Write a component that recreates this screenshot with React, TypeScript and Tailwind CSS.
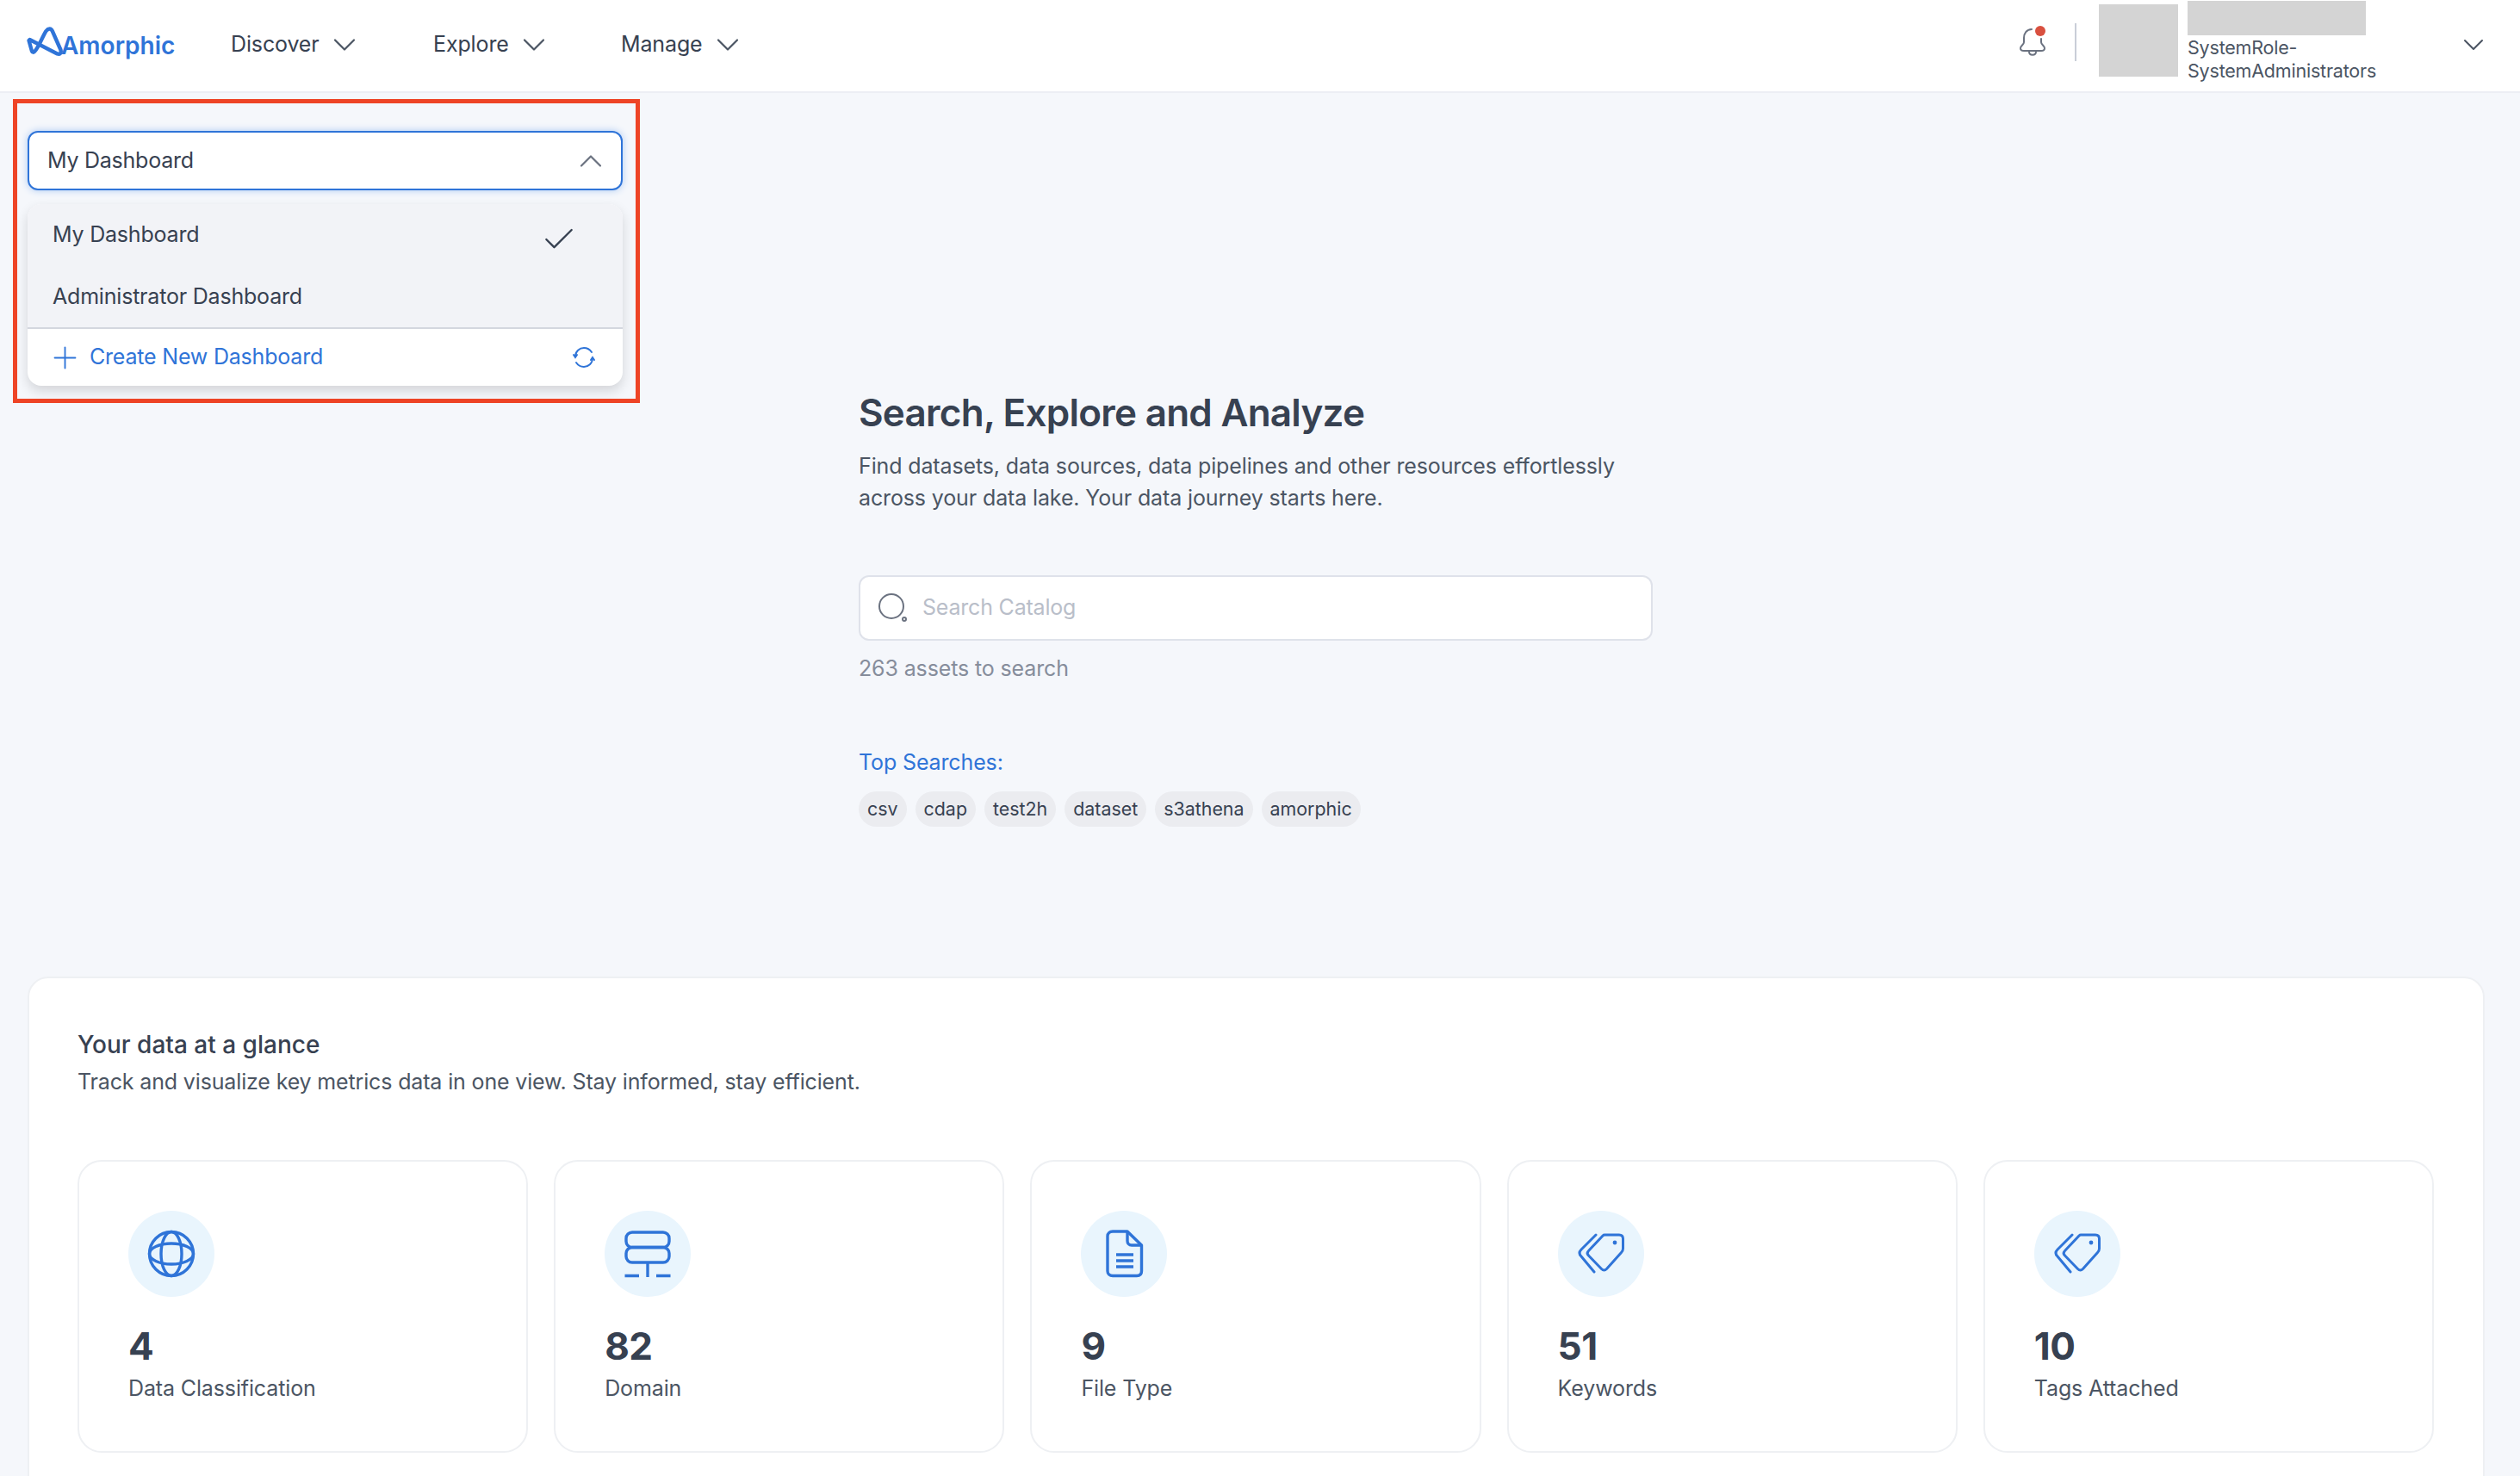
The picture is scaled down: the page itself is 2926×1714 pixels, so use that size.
import { Check, ChevronDown, ChevronUp, Plus } from "lucide-react";

const LogoMark = () => (
  <svg width="44" height="36" viewBox="0 0 44 36" fill="none" className="mb-[8px] shrink-0">
    <path
      d="M3.5 17 L7 29.5 C7.6 31 9 31 10 30 C15 25 19 13 23.5 6 C26 2.8 29.5 2.5 31 6.5 L40.5 28 C41.5 31.5 39.5 33.5 36.5 32.5 L4.5 16 Z"
      stroke="#2f74d8"
      strokeWidth="4.4"
      strokeLinejoin="round"
      strokeLinecap="round"
    />
  </svg>
);

const NavItem = ({ label, className }: { label: string; className: string }) => (
  <button className={`flex items-center gap-[7px] text-[25px] tracking-[-0.13px] text-[#374151] ${className}`}>
    <span>{label}</span>
    <ChevronDown className="w-[44px] h-[44px] text-[#4b5563]" strokeWidth={1.2} />
  </button>
);

const Bell = () => (
  <svg width="36" height="40" viewBox="0 0 36 40" fill="none" className="mb-[8px]">
    <path
      d="M16 6 C10 6 7 11 7 16 V21 C7 24 3 25 3 28 C3 30 5 31 7 31 H27 C29 31 31 30 31 28 C31 25 27 24 27 21 V17"
      stroke="#6b7280"
      strokeWidth="2"
      strokeLinecap="round"
    />
    <path d="M13 32 C13 37 21 37 21 32" stroke="#6b7280" strokeWidth="2" />
    <circle cx="26" cy="8" r="6" fill="#d9503f" />
  </svg>
);

const Globe = () => (
  <svg width="58" height="58" viewBox="0 0 58 58" fill="none" stroke="#2f74d8" strokeWidth="3.4">
    <circle cx="29" cy="29" r="25.5" />
    <ellipse cx="29" cy="29" rx="12" ry="25.5" />
    <ellipse cx="29" cy="29" rx="25.5" ry="12" />
  </svg>
);

const Server = () => (
  <svg width="58" height="58" viewBox="0 0 58 58" fill="none" stroke="#2f74d8" strokeWidth="3.4">
    <rect x="4" y="4" width="50" height="17.5" rx="7" />
    <rect x="4" y="21.5" width="50" height="17.5" rx="7" />
    <path d="M29 39 V56" />
    <path d="M2.5 54.5 H19 M39 54.5 H55.5" />
  </svg>
);

const FileDoc = () => (
  <svg width="58" height="58" viewBox="0 0 58 58" fill="none" stroke="#2f74d8" strokeWidth="3.4" strokeLinejoin="round">
    <path d="M16 3 H33 L49.5 19 V49 C49.5 52.5 47.5 54.5 44 54.5 H16 C12.5 54.5 10 52.5 10 49 V8.5 C10 5 12.5 3 16 3 Z" />
    <path d="M33 3 V14 C33 17 35 19 38 19 H49.5" />
    <path d="M20 30 H40 M20 37 H40 M20 44 H40" />
  </svg>
);

const TagIcon = () => (
  <svg width="58" height="58" viewBox="0 0 58 58" fill="none" stroke="#2f74d8" strokeWidth="3" strokeLinejoin="round" strokeLinecap="round">
    <path d="M33 7 H50 C53 7 54.5 8.5 54.5 11.5 V23 C54.5 25 54 26 52.5 27.5 L35.5 46.5 C33.5 48.5 31.5 48.5 29.5 46.5 L14.5 31 C12.5 29 12.5 27.5 14.5 25.5 L31 8 C31.5 7.5 32 7 33 7 Z" />
    <path d="M23 7 L6 24 C3.5 26.5 3.5 29.5 6 32 L21 50" />
    <circle cx="45" cy="16" r="2.4" fill="#2f74d8" stroke="none" />
  </svg>
);

const SearchIcon = () => (
  <svg width="36" height="36" viewBox="0 0 36 36" fill="none" stroke="#6b7280" strokeWidth="2">
    <circle cx="16" cy="16" r="14" />
    <circle cx="31" cy="31" r="2" />
  </svg>
);

const RefreshIcon = () => (
  <svg width="28" height="28" viewBox="0 0 28 28" fill="none" stroke="#2f74d8" strokeWidth="2" strokeLinecap="round">
    <path d="M4 13 C4 7 9 3 14 3 C18 3 21 5 23 8" />
    <path d="M24 15 C24 21 19 25 14 25 C10 25 7 23 5 20" />
    <path d="M2 11 L4 14 L6 11 M22 17 L24 14 L26 17" />
  </svg>
);

const stats = [
  { value: "4", label: "Data Classification", icon: <Globe /> },
  { value: "82", label: "Domain", icon: <Server /> },
  { value: "9", label: "File Type", icon: <FileDoc /> },
  { value: "51", label: "Keywords", icon: <TagIcon /> },
  { value: "10", label: "Tags Attached", icon: <TagIcon /> },
];

const chips = ["csv", "cdap", "test2h", "dataset", "s3athena", "amorphic"];

const App = () => {
  return (
    <div className="w-[2926px] h-[1714px] overflow-hidden bg-[#f5f7fb] font-['Inter',sans-serif] text-[#374151]">
      <header className="h-[108px] bg-white border-b-2 border-[#eceef4] flex items-center pl-[30px] pr-[34px] pb-[2px]">
        <div className="flex items-center w-[238px]">
          <LogoMark />
          <span className="text-[28px] font-semibold text-[#2f74d8] mb-[-2px] -ml-[3px]">Amorphic</span>
        </div>
        <NavItem label="Discover" className="w-[235px]" />
        <NavItem label="Explore" className="w-[218px]" />
        <NavItem label="Manage" className="" />
        <div className="ml-auto flex items-center">
          <Bell />
          <div className="w-[2px] h-[44px] bg-[#c9ced8] ml-[30px] mr-[26px] mb-[6px]" />
          <div className="w-[92px] h-[84px] bg-[#d4d4d4] mb-[10px]" />
          <div className="w-[312px] ml-[11px] h-[108px] flex flex-col pt-[3px]">
            <div className="w-[207px] h-[40px] bg-[#d4d4d4]" />
            <div className="text-[21.5px] leading-[27px] tracking-[-0.2px] text-[#4b5563] mt-[1px]">
              SystemRole-
              <br />
              SystemAdministrators
            </div>
          </div>
          <ChevronDown className="w-[40px] h-[40px] text-[#4b5563]" strokeWidth={1.2} />
        </div>
      </header>

      <div className="flex h-[1026px]">
        <div className="w-[997px] pl-[15px] pt-[7px]">
          <div className="w-[728px] h-[353px] border-[5px] border-[#ee4426] pl-[12px] pr-[15px] pt-[32px]">
            <div className="h-[69px] bg-white border-2 border-[#2f74d8] rounded-[12px] shadow-[0_0_8px_#a9c8f3] flex items-center justify-between pl-[21px] pr-[13px] text-[25px] tracking-[-0.25px]">
              <span>My Dashboard</span>
              <ChevronUp className="w-[44px] h-[44px] text-[#6b7280]" strokeWidth={1.2} />
            </div>
            <div className="mt-[16px] rounded-[16px] bg-white shadow-[0_6px_14px_rgba(0,0,0,0.14)] overflow-hidden">
              <div className="bg-[#f2f3f7] h-[145px] border-b-2 border-[#d4d7de] pl-[29px] text-[25px] tracking-[-0.2px]">
                <div className="flex items-center justify-between h-[72px] pr-[52px]">
                  <span>My Dashboard</span>
                  <Check className="w-[44px] h-[44px] mt-[10px]" strokeWidth={1.3} />
                </div>
                <div className="h-[71px] flex items-center">Administrator Dashboard</div>
              </div>
              <div className="h-[66px] flex items-center justify-between pl-[23px] pr-[31px] text-[#2f74d8] text-[25px] tracking-[-0.2px]">
                <span className="flex items-center gap-[8px]">
                  <Plus className="w-[41px] h-[41px]" strokeWidth={1.1} />
                  Create New Dashboard
                </span>
                <RefreshIcon />
              </div>
            </div>
          </div>
        </div>

        <section className="w-[922px] pt-[346px]">
          <h1 className="text-[44px] leading-[50px] font-semibold tracking-[-0.75px]">Search, Explore and Analyze</h1>
          <p className="text-[25px] leading-[37px] tracking-[-0.13px] text-[#4b5563] mt-[19px]">
            Find datasets, data sources, data pipelines and other resources effortlessly
            <br />
            across your data lake. Your data journey starts here.
          </p>
          <div className="mt-[71px] h-[76px] bg-white border-2 border-[#dfe2ea] rounded-[12px] flex items-center pl-[20px] gap-[16px]">
            <SearchIcon />
            <span className="text-[25px] tracking-[-0.2px] text-[#b9bec9]">Search Catalog</span>
          </div>
          <div className="mt-[16px] text-[25px] leading-[32px] tracking-[-0.13px] text-[#868d9b]">263 assets to search</div>
          <div className="mt-[77px] text-[25px] leading-[32px] tracking-[-0.13px] text-[#2f74d8]">Top Searches:</div>
          <div className="mt-[18px] flex gap-[10px]">
            {chips.map((c) => (
              <span key={c} className="h-[41px] px-[10px] flex items-center rounded-full bg-[#ebecf0] text-[21.4px] text-[#374151]">
                {c}
              </span>
            ))}
          </div>
        </section>
      </div>

      <section className="mx-[32px] w-[2853px] h-[640px] bg-white border-2 border-[#eef0f3] rounded-[24px] pt-[59px] pl-[56px] pr-[57px]">
        <h2 className="text-[28px] leading-[36px] font-medium">Your data at a glance</h2>
        <p className="mt-[9px] text-[25px] leading-[32px] tracking-[-0.15px] text-[#4b5563]">
          Track and visualize key metrics data in one view. Stay informed, stay efficient.
        </p>
        <div className="mt-[75px] grid grid-cols-5 gap-[30px]">
          {stats.map((s) => (
            <div key={s.label} className="h-[340px] border-2 border-[#eef0f3] rounded-[28px] pt-[57px] pl-[57px]">
              <div className="w-[100px] h-[100px] rounded-full bg-[#e9f5fd] flex items-center justify-center">{s.icon}</div>
              <div className="mt-[31px] text-[44px] leading-[52px] font-bold tracking-[-0.5px]">{s.value}</div>
              <div className="mt-[7px] text-[25px] leading-[32px] tracking-[-0.13px] text-[#4b5563]">{s.label}</div>
            </div>
          ))}
        </div>
      </section>
    </div>
  );
};

export default App;
